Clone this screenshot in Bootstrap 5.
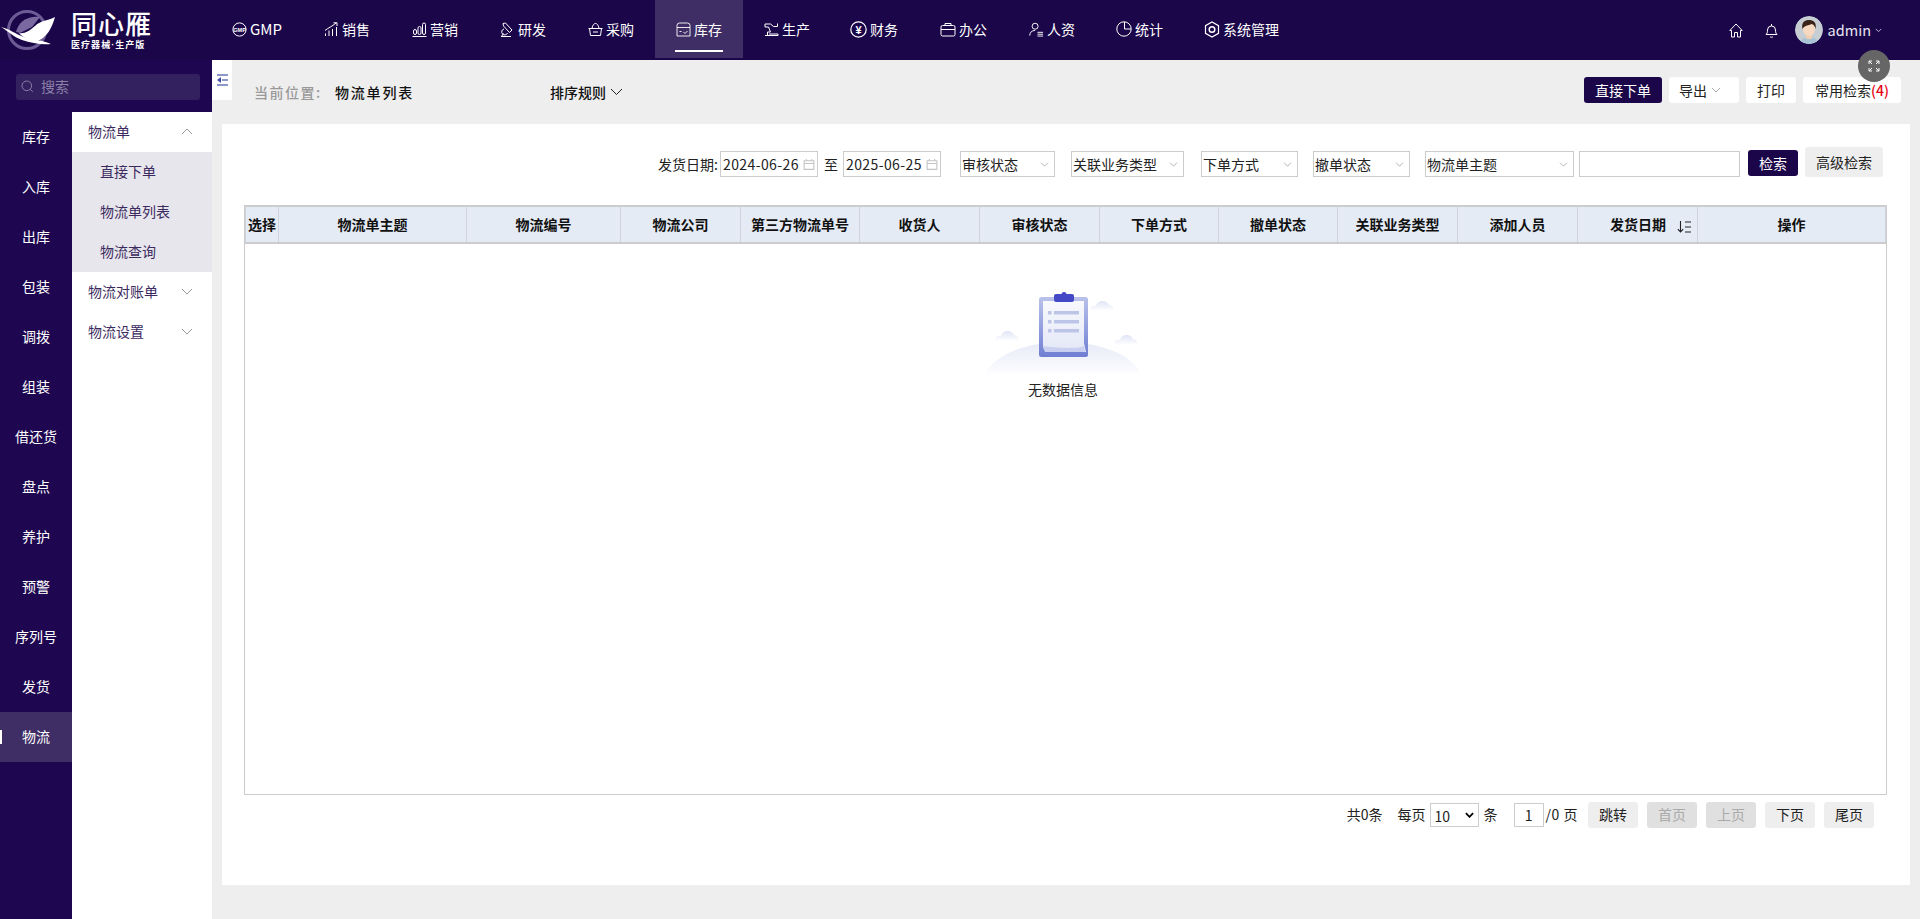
<!DOCTYPE html>
<html lang="zh-CN">
<head>
<meta charset="utf-8">
<title>物流单列表</title>
<link href="https://cdn.jsdelivr.net/npm/bootstrap@5.3.0/dist/css/bootstrap.min.css" rel="stylesheet">
<style>
:root{--ink:#1b0649;--rail:#1e0750;--chev:url("data:image/svg+xml,%3Csvg xmlns='http://www.w3.org/2000/svg' viewBox='0 0 10 6'%3E%3Cpath d='M.8.8 5 5 9.2.8' fill='none' stroke='%23999' stroke-width='.9'/%3E%3C/svg%3E");}
html,body{height:100%;}
body{font-family:"Noto Sans CJK SC","Liberation Sans",sans-serif;font-size:14px;color:#222;overflow:hidden;background:#eee;}
.app-top{height:60px;background:var(--ink);color:#fff;}
.brand{width:211px;height:60px;}
.brand-txt{margin-left:14px;width:83px;font-family:"Liberation Sans","Noto Sans CJK SC",sans-serif;}
.brand-name{font-size:26px;line-height:28px;font-weight:500;letter-spacing:1px;margin-top:11px;white-space:nowrap;}
.brand-sub{font-size:9px;line-height:11px;font-weight:700;letter-spacing:1.05px;white-space:nowrap;margin-top:1px;}
.brand-mark{margin-left:1px;}
.topnav .nav-link{height:58px;padding:0 21px;color:#fff;font-size:14px;gap:3px;border-bottom:0;position:relative;}
.topnav .nav-link.on{background:#3f2d66;}
.topnav .nav-link.on::after{content:"";position:absolute;left:20px;right:20px;bottom:6px;height:2px;background:#fff;}
.topnav svg{flex:none;}
.topnav .nav-link.gmp{font-size:15px;}
.topnav .nav-link.tight{margin-right:-2px;}
.topnav .nav-link.t1{margin-right:-1px;}
.top-tools{margin-right:38px;gap:22px;}
.ava{width:28px;height:28px;border-radius:50%;display:block;}
.who{font-size:14.5px;margin-left:-5px;color:#e9e6f2;}
.who-name{margin:0 4px 0 5px;}
.wrap{height:859px;}
.side{width:212px;background:var(--rail);}
.find{height:52px;padding:14px 12px 0 16px;}
.find-box{height:26px;background:#33205f;border-radius:3px;padding:0 0 2px 5px;gap:7px;color:#8b7fa8;font-size:14px;}
.rail{width:72px;}
.rail .nav-link{height:50px;color:#fff;padding:0 0 2px;font-size:14px;display:flex;align-items:center;justify-content:center;position:relative;}
.rail .nav-link.on{background:#3f2d66;}
.rail .nav-link.on::before{content:"";position:absolute;left:0;top:18px;width:2px;height:14px;background:#fff;}
.sub{width:140px;background:#fff;}
.sub .nav-link{height:40px;color:#3a2a5e;padding:0 19px 2px 16px;font-size:14px;display:flex;align-items:center;justify-content:space-between;}
.sub-open{background:#e8e6ed;}
.sub-open .nav-link{padding-left:28px;}
.stage{position:relative;min-width:0;background:#eee;}
.fold{position:absolute;left:0;top:0;width:20px;height:40px;background:#fff;display:flex;align-items:center;justify-content:center;}
.crumb{height:64px;padding:0 19px 4px 42px;}
.crumb-a{color:#999;font-weight:500;font-size:14px;letter-spacing:1.5px;width:81px;padding-top:4px;white-space:nowrap;}
.crumb-b{color:#111;font-weight:500;font-size:14px;letter-spacing:1.8px;width:215px;padding-top:4px;white-space:nowrap;}
.crumb-c{color:#111;font-weight:500;padding-top:4px;gap:4px;}
.tbtn{height:26px;padding:0 10px;font-size:14px;line-height:24px;border-radius:3px;background:#fff;color:#222;border:0;white-space:nowrap;}
.tbtn.dark{background:var(--ink);color:#fff;}
.w-a{width:78px;}.w-b{width:70px;}.w-c{width:50px;}.w-d{width:98px;padding:0;}
.bar-acts{gap:7px;margin-right:0;}
.red{color:#e60012;font-weight:500;}
.panel{margin:0 10px;width:1688px;height:761px;background:#fff;padding-top:25px;}
.filt{height:30px;padding-right:27px;font-size:14px;line-height:26px;}
.fld{height:26px;border:1px solid #ccc;border-radius:0;padding:0 0 0 2px;font-size:14px;line-height:24px;color:#222;box-shadow:none;}
.fld-date{width:98px;padding-right:0;letter-spacing:.4px;background:no-repeat right 1px center/14px 13px url("data:image/svg+xml,%3Csvg xmlns='http://www.w3.org/2000/svg' viewBox='0 0 12 12'%3E%3Cpath d='M1.500 2.500h9v8h-9zM1.500 5h9M3.500 1v2M8.500 1v2' fill='none' stroke='%23c4c4c4'/%3E%3C/svg%3E");}
.form-select.fld{background-image:var(--chev);background-size:9px 5px;background-position:right 5px center;padding:0 16px 0 1px;}
.s1{width:95px;margin-left:19px;}.s2{width:113px;margin-left:16px;}.s3{width:97px;margin-left:17px;}.s4{width:97px;margin-left:15px;}.s5{width:149px;margin-left:15px;}
.kw{width:161px;margin-left:5px;}
.lbl{margin-right:2px;}.to{margin:0 5px 0 6px;}
.go{height:26px;width:50px;margin:0 7px 2px 8px;padding:0;background:var(--ink);color:#fff;border:0;border-radius:3px;font-size:14px;line-height:26px;}
.go:hover{background:var(--ink);color:#fff;}
.adv{height:30px;width:78px;padding:0;background:#eee;color:#222;border:0;border-radius:3px;font-size:14px;margin-top:-4px;}
.grid-box{margin:26px 23px 0 22px;height:590px;border:1px solid #ccc;}
.grid-box .table{table-layout:fixed;width:100%;margin:0;border-color:#ccc;}
.grid-box th{height:36px;padding:0;background:#e4ebf5;border-color:#cfd4dc;border-bottom:2px solid #ccc;font-size:14px;font-weight:700;text-align:center;vertical-align:middle;color:#111;white-space:nowrap;box-shadow:none;}
.grid-box th.sorted{text-align:right;padding-right:5px;}
.c0{width:33px}.c1{width:188px}.c2{width:154px}.c3{width:120px}.c4{width:119px}.c5{width:120px}.c6{width:120px}.c7{width:119px}.c8{width:119px}.c9{width:120px}.c10{width:120px}.c11{width:120px}
.sorter{position:relative;top:1px;margin-left:11px;}
.empty{padding-top:48px;margin-right:5px;}
.empty-txt{color:#222;line-height:20px;}
.pager{height:26px;margin-top:7px;padding-right:36px;font-size:14px;color:#222;}
.pager span{padding-bottom:2px;}
.pg-of{letter-spacing:.5px;}
.pg{height:26px;width:50px;padding:0 0 1px;background:#eee;color:#222;border:0;border-radius:3px;font-size:14px;line-height:25px;margin-left:9px;}
.pg.off{background:#e0e0e0;color:#aaa;opacity:1;}
.pg.first{margin-left:10px;}
.sz{width:49px;height:24px;margin:0 5px 0 4px;}
.form-select.sz{background-image:url("data:image/svg+xml,%3Csvg xmlns='http://www.w3.org/2000/svg' viewBox='0 0 10 6'%3E%3Cpath d='M1 1l4 4 4-4' fill='none' stroke='%23000' stroke-width='2'/%3E%3C/svg%3E");background-size:9px 6px;background-position:right 4px center;padding-left:4px;padding-right:14px;}
.pn{width:30px;height:24px;text-align:center;margin:0 2px 0 16px;padding:0;}
.ml-a{margin-left:15px;}
.fs-btn{position:absolute;top:-10px;right:30px;width:32px;height:32px;border-radius:50%;background:#666;display:flex;align-items:center;justify-content:center;z-index:3;}
</style>
</head>
<body>
<header class="app-top d-flex align-items-center">
  <div class="brand d-flex align-items-start flex-none">
    <svg class="brand-mark mt-2" width="56" height="46" viewBox="0 0 56 46" aria-hidden="true">
      <circle cx="26" cy="22" r="18.500" fill="none" stroke="#6d5b96" stroke-width="3"/>
      <path d="M15 24C17 14 27 7 39 9L31 19 19 25Z" fill="#7a69a1"/>
      <path d="M54 9C47 13 40 12 34 18 28 23 24 26 18 25 22 30 29 32 37 33 46 29 51 20 54 9Z" fill="#fff"/>
      <path d="M0 19C9 21 14 26 23 29 32 32 42 32 50 36 41 37 30 35 21 32 13 29 8 24 0 19Z" fill="#fff"/>
    </svg>
    <div class="brand-txt">
      <div class="brand-name">同心雁</div>
      <div class="brand-sub">医疗器械·生产版</div>
    </div>
  </div>
  <nav class="nav topnav flex-nowrap flex-grow-1 align-self-start">
    <a class="nav-link gmp d-flex align-items-center" href="#"><svg width="15" height="15" viewBox="0 0 15 15"><circle cx="7.500" cy="7.500" r="6.600" fill="none" stroke="#fff"/><text x="7.500" y="9.600" font-size="5.600" font-weight="700" text-anchor="middle" fill="#fff" font-family="Liberation Sans">GMP</text></svg>GMP</a>
    <a class="nav-link d-flex align-items-center" href="#"><svg width="15" height="15" viewBox="0 0 15 15" fill="none" stroke="#fff"><path d="M1 8.500C4 6 8 4.500 12 1M9.500 .8H13V4"/><path d="M1.500 14v-2.500M5 14V8.500M8.500 14V7M12.500 14V5"/></svg>销售</a>
    <a class="nav-link d-flex align-items-center" href="#"><svg width="15" height="15" viewBox="0 0 15 15" fill="none" stroke="#fff"><rect x="1.500" y="7.500" width="3" height="5" rx="1.500"/><rect x="6" y="4.500" width="3" height="8" rx="1.500"/><rect x="10.500" y="1" width="3" height="11.500" rx="1.500"/><path d="M.5 14.500h14"/></svg>营销</a>
    <a class="nav-link d-flex align-items-center" href="#"><svg width="15" height="15" viewBox="0 0 15 15" fill="none" stroke="#fff"><path d="M3 1.500 5.500 1l6.500 7-2.500 2.500L3.500 4zM7.500 11A3 3 0 1 1 4 7M1 14.500h10M3.500 11.500 1.500 14.500"/></svg>研发</a>
    <a class="nav-link d-flex align-items-center" href="#"><svg width="15" height="15" viewBox="0 0 15 15" fill="none" stroke="#fff"><path d="M.5 6.500h14M1.500 6.500l1 7h10l1-7M4 6.500C4.500 3 6 1.500 7.500 1.500S10.500 3 11 6.500M5 10h5"/></svg>采购</a>
    <a class="nav-link on d-flex align-items-center" href="#"><svg width="15" height="15" viewBox="0 0 15 15" fill="none" stroke="#fff" stroke-width=".9"><path d="M1 5.500V3.500A2.500 2.500 0 0 1 3.500 1h8A2.500 2.500 0 0 1 14 3.500v2M1 5.500h13v8.500H1zM3.500 9.500h2M7.500 10l1.500 1.500L11.500 9"/></svg>库存</a>
    <a class="nav-link tight d-flex align-items-center" href="#"><svg width="15" height="15" viewBox="0 0 15 15" fill="none" stroke="#fff"><path d="M1 2h5.500l3 2.500h4M13.500 1.500v3M1 2v3h3.500l2 5H3.500v3.500M1 13.500h13v-1.500H5"/></svg>生产</a>
    <a class="nav-link d-flex align-items-center" href="#"><svg width="17" height="17" viewBox="0 0 17 17"><circle cx="8.500" cy="8.500" r="7.700" fill="none" stroke="#fff" stroke-width="1.200"/><text x="8.500" y="12.500" font-size="11" font-weight="700" text-anchor="middle" fill="#fff" font-family="Liberation Sans">¥</text></svg>财务</a>
    <a class="nav-link d-flex align-items-center" href="#"><svg width="16" height="15" viewBox="0 0 16 15" fill="none" stroke="#fff"><rect x="1" y="3.500" width="14" height="10.500" rx="1.500"/><path d="M5 3.500V1.500h6v2M1 7.500h14"/></svg>办公</a>
    <a class="nav-link t1 d-flex align-items-center" href="#"><svg width="15" height="15" viewBox="0 0 16 15" fill="none" stroke="#fff"><circle cx="6.500" cy="4" r="3.200"/><path d="M.8 14c0-3.500 2.200-5.500 5.700-5.500M9 10.500h6M9 12.500h6M9 14.500h6"/></svg>人资</a>
    <a class="nav-link t1 d-flex align-items-center" href="#"><svg width="16" height="16" viewBox="0 0 16 16" fill="none" stroke="#fff"><circle cx="8" cy="8" r="7.200"/><path d="M8.500 1V8H15"/></svg>统计</a>
    <a class="nav-link d-flex align-items-center" href="#"><svg width="16" height="17" viewBox="0 0 16 17" fill="none" stroke="#fff" stroke-width="1.200"><path d="M8 1l6.500 3.700v7.600L8 16l-6.500-3.700V4.700z"/><circle cx="8" cy="8.500" r="2.800" stroke-width="1.500"/></svg>系统管理</a>
  </nav>
  <div class="top-tools d-flex align-items-center">
    <svg width="14" height="15" viewBox="0 0 14 15" fill="none" stroke="#fff"><path d="M7 1 .8 7.500H2.500V14H5.500V9.500H8.500V14H11.500V7.500H13.200z" stroke-linejoin="round"/></svg>
    <svg width="13" height="15" viewBox="0 0 13 15" fill="none" stroke="#fff"><path d="M1 11.500c1-1 1.500-2 1.500-4.500A4 4 0 0 1 10.500 7c0 2.500.5 3.500 1.500 4.500zM5 13.500c.5 1 2.500 1 3 0M6.500 1v2"/></svg>
    <div class="d-flex align-items-center who">
      <svg class="ava" viewBox="0 0 28 28"><defs><clipPath id="cav"><circle cx="14" cy="14" r="14"/></clipPath></defs><g clip-path="url(#cav)"><rect width="28" height="28" fill="#c6ced4"/><path d="M4 28c1-5 6-7 10-7s9 2 10 7z" fill="#a8c3d6"/><rect x="11" y="17" width="6" height="6" fill="#f0cdb0"/><ellipse cx="14" cy="13" rx="6" ry="7" fill="#f6d9c0"/><path d="M7.500 13C6 6 10 4 14 4s8 2 6.500 9c-.5-3-2-4.500-4-5-2 1.500-7 1-9 5z" fill="#3a2418"/></g></svg>
      <span class="who-name">admin</span>
      <svg width="7" height="5" viewBox="0 0 8 5" fill="none" stroke="#cfc9de"><path d="M1 .8l3 3 3-3"/></svg>
    </div>
  </div>
</header>
<div class="wrap d-flex">
  <aside class="side d-flex flex-column flex-none">
    <div class="find"><div class="find-box d-flex align-items-center"><svg width="13" height="13" viewBox="0 0 13 13" fill="none" stroke="#8b7fa8"><circle cx="5.800" cy="5.800" r="4.800"/><path d="M9.300 9.300l2.500 2.500"/></svg>搜索</div></div>
    <div class="d-flex flex-grow-1">
      <nav class="nav flex-column rail">
        <a class="nav-link" href="#">库存</a><a class="nav-link" href="#">入库</a><a class="nav-link" href="#">出库</a><a class="nav-link" href="#">包装</a><a class="nav-link" href="#">调拨</a><a class="nav-link" href="#">组装</a><a class="nav-link" href="#">借还货</a><a class="nav-link" href="#">盘点</a><a class="nav-link" href="#">养护</a><a class="nav-link" href="#">预警</a><a class="nav-link" href="#">序列号</a><a class="nav-link" href="#">发货</a><a class="nav-link on" href="#">物流</a>
      </nav>
      <nav class="nav flex-column flex-nowrap sub">
        <a class="nav-link" href="#">物流单<svg width="12" height="7" viewBox="0 0 12 7" fill="none" stroke="#999"><path d="M1 6 6 1l5 5"/></svg></a>
        <div class="sub-open">
          <a class="nav-link" href="#">直接下单</a><a class="nav-link" href="#">物流单列表</a><a class="nav-link" href="#">物流查询</a>
        </div>
        <a class="nav-link" href="#">物流对账单<svg width="12" height="7" viewBox="0 0 12 7" fill="none" stroke="#999"><path d="M1 1l5 5 5-5"/></svg></a>
        <a class="nav-link" href="#">物流设置<svg width="12" height="7" viewBox="0 0 12 7" fill="none" stroke="#999"><path d="M1 1l5 5 5-5"/></svg></a>
      </nav>
    </div>
  </aside>
  <main class="stage flex-grow-1">
    <div class="fold"><svg width="11" height="12" viewBox="0 0 11 12"><path d="M0 1h11M0 11h11" stroke="#8e97c9" stroke-width="2"/><path d="M5 6h6" stroke="#8e97c9" stroke-width="2"/><path d="M4 3v6L0 6z" fill="#3f4fa8"/></svg></div>
    <div class="fs-btn"><svg width="12" height="12" viewBox="0 0 12 12" fill="none" stroke="#fff"><path d="M1 4V1h3M8 1h3v3M11 8v3H8M4 11H1V8M1 1l3 3M11 1 8 4M11 11 8 8M1 11l3-3"/></svg></div>
    <div class="crumb d-flex align-items-center">
      <span class="crumb-a">当前位置:</span>
      <span class="crumb-b">物流单列表</span>
      <span class="crumb-c d-flex align-items-center">排序规则<svg width="13" height="8" viewBox="0 0 13 8" fill="none" stroke="#222"><path d="M1 1l5.500 5.500L12 1"/></svg></span>
      <div class="bar-acts d-flex ms-auto">
        <button class="btn tbtn dark w-a" type="button">直接下单</button>
        <button class="btn tbtn w-b d-flex align-items-center gap-1" type="button">导出<svg width="10" height="6" viewBox="0 0 10 6" fill="none" stroke="#aaa"><path d="M1 1l4 4 4-4"/></svg></button>
        <button class="btn tbtn w-c" type="button">打印</button>
        <button class="btn tbtn w-d" type="button">常用检索<span class="red">(4)</span></button>
      </div>
    </div>
    <section class="panel">
      <form class="filt d-flex justify-content-end align-items-center">
        <span class="lbl">发货日期:</span>
        <input class="form-control fld fld-date" value="2024-06-26" aria-label="开始">
        <span class="to">至</span>
        <input class="form-control fld fld-date" value="2025-06-25" aria-label="结束">
        <select class="form-select fld s1" aria-label="审核状态"><option>审核状态</option></select>
        <select class="form-select fld s2" aria-label="关联业务类型"><option>关联业务类型</option></select>
        <select class="form-select fld s3" aria-label="下单方式"><option>下单方式</option></select>
        <select class="form-select fld s4" aria-label="撤单状态"><option>撤单状态</option></select>
        <select class="form-select fld s5" aria-label="物流单主题"><option>物流单主题</option></select>
        <input class="form-control fld kw" aria-label="关键词">
        <button class="btn go" type="button">检索</button>
        <button class="btn adv" type="button">高级检索</button>
      </form>
      <div class="grid-box">
        <table class="table table-bordered">
          <colgroup><col class="c0"><col class="c1"><col class="c2"><col class="c3"><col class="c4"><col class="c5"><col class="c6"><col class="c7"><col class="c8"><col class="c9"><col class="c10"><col class="c11"><col></colgroup>
          <thead><tr><th>选择</th><th>物流单主题</th><th>物流编号</th><th>物流公司</th><th>第三方物流单号</th><th>收货人</th><th>审核状态</th><th>下单方式</th><th>撤单状态</th><th>关联业务类型</th><th>添加人员</th><th class="sorted">发货日期<svg class="sorter" width="15" height="12" viewBox="0 0 15 12" fill="none" stroke="#222" stroke-width="1.100"><path d="M3.500 0v11M.8 8.200l2.700 2.800 2.700-2.800M8 1h6M8 6h6M8 11h6"/></svg></th><th>操作</th></tr></thead>
        </table>
        <div class="empty d-flex flex-column align-items-center">
          <svg width="160" height="87" viewBox="0 0 160 87" aria-hidden="true">
            <defs>
              <linearGradient id="gh" x1="0" y1="0" x2="0" y2="1"><stop offset="0" stop-color="#e7eaf7"/><stop offset=".7" stop-color="#f7f8fd"/><stop offset="1" stop-color="#fff"/></linearGradient>
              <linearGradient id="gc" x1="0" y1="0" x2="0" y2="1"><stop offset="0" stop-color="#e0e4f6"/><stop offset="1" stop-color="#fff"/></linearGradient>
              <linearGradient id="gb" x1="0" y1="0" x2="0" y2="1"><stop offset="0" stop-color="#b9c2ea"/><stop offset="1" stop-color="#6f7ed2"/></linearGradient>
              <linearGradient id="gp" x1="0" y1="0" x2="0" y2="1"><stop offset="0" stop-color="#f8f9fd"/><stop offset="1" stop-color="#e3e7f7"/></linearGradient>
              <path id="cloud" d="M0 14c0-4 3-6 6-5 1-6 11-7 13-1 3 0 5 3 5 6z"/>
            </defs>
            <path d="M1 84C10 62 45 50 80 50s71 12 79 34z" fill="url(#gh)"/>
            <use href="#cloud" x="12" y="35" fill="url(#gc)"/>
            <use href="#cloud" x="107" y="5" fill="url(#gc)"/>
            <use href="#cloud" x="131" y="39" fill="url(#gc)"/>
            <rect x="56" y="5" width="49" height="60" rx="2.500" fill="url(#gb)"/>
            <path d="M60 9h41v42l2 9-39-1c-3 0-4-3-4-6z" fill="url(#gp)"/>
            <path d="M60 54c10 2 36 3 41 0l1 6H62z" fill="#c8cff0"/>
            <rect x="71" y="2" width="20" height="8" rx="2" fill="#4649c6"/>
            <circle cx="81" cy="2.500" r="2.500" fill="#4649c6"/>
            <g fill="#bcc5e8"><rect x="65" y="19" width="3.500" height="3.500"/><rect x="71" y="19" width="25" height="3.500"/><rect x="65" y="28" width="3.500" height="3.500"/><rect x="71" y="28" width="25" height="3.500"/><rect x="65" y="37" width="3.500" height="3.500"/><rect x="71" y="37" width="25" height="3.500"/></g>
          </svg>
          <div class="empty-txt">无数据信息</div>
        </div>
      </div>
      <div class="pager d-flex justify-content-end align-items-center">
        <span>共0条</span>
        <span class="ml-a">每页</span>
        <select class="form-select fld sz" aria-label="每页条数"><option>10</option></select>
        <span>条</span>
        <input class="form-control fld pn" value="1" aria-label="页码">
        <span class="pg-of">/0 页</span>
        <button class="btn pg first" type="button">跳转</button>
        <button class="btn pg off" type="button" disabled>首页</button>
        <button class="btn pg off" type="button" disabled>上页</button>
        <button class="btn pg" type="button">下页</button>
        <button class="btn pg" type="button">尾页</button>
      </div>
    </section>
  </main>
</div>
<script src="https://cdn.jsdelivr.net/npm/bootstrap@5.3.0/dist/js/bootstrap.bundle.min.js"></script>
</body>
</html>
